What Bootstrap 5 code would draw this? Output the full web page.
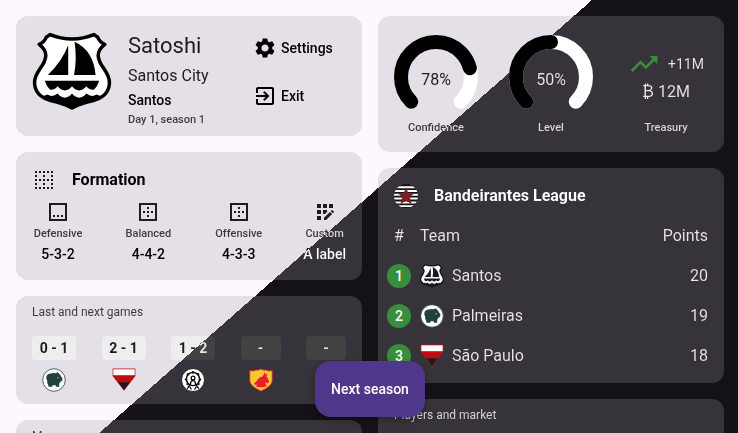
<!DOCTYPE html>
<html lang="en">
<head>
<meta charset="utf-8">
<meta name="viewport" content="width=device-width, initial-scale=1">
<title>Santos – club dashboard</title>
<link href="https://cdn.jsdelivr.net/npm/bootstrap@5.3.0/dist/css/bootstrap.min.css" rel="stylesheet">
<style>
  /* Light and dark theme meet on one diagonal of the window.
     Every surface and every text uses the same fixed gradient, so the seam runs through all of them. */
  :root { --seam: 48.1%; --angle: 138.7deg; }
  body, .panel, .score, .ink { background-attachment: fixed; background-repeat: no-repeat; }
  body {
    font-family: Roboto, "Liberation Sans", sans-serif;
    height: 100vh; overflow: hidden;
    background-image: linear-gradient(var(--angle), #fef7ff var(--seam), #141218 var(--seam));
  }
  .board { padding: 16px 14px 0 16px; gap: 16px; }
  .lane { flex: 1 1 0; min-width: 0; gap: 16px; }
  .panel {
    border-radius: 12px; padding: 16px;
    background-image: linear-gradient(var(--angle), #e5e0e7 var(--seam), #36343a var(--seam));
  }
  .ink {
    color: #1d1b20; -webkit-text-fill-color: transparent;
    background-image: linear-gradient(var(--angle), #1d1b20 var(--seam), #e9e3ea var(--seam));
    -webkit-background-clip: text; background-clip: text;
  }
  .ink-strong { background-image: linear-gradient(var(--angle), #000 var(--seam), #fff var(--seam)); }
  .ink-soft { background-image: linear-gradient(var(--angle), #3b3840 var(--seam), #dcd6df var(--seam)); }

  .t-22 { font-size: 22px; line-height: 28px; }
  .t-16 { font-size: 16px; line-height: 24px; }
  .t-14 { font-size: 14px; line-height: 20px; }
  .t-12 { font-size: 12px; line-height: 16px; }
  .t-11 { font-size: 11px; line-height: 16px; }
  .medium { font-weight: 500; }
  .glyph { width: 24px; height: 24px; fill: #1d1b20; flex: none; display: block; }
  .crest-big { width: 80px; height: 80px; flex: none; }

  .club { padding: 8px 16px; }
  .club-info { padding-top: 8px; gap: 2px; }
  .club-city { padding-top: 2px; }
  .club-actions { width: 93px; }
  .club-actions button { height: 48px; gap: 4px; }
  .club-actions .glyph { fill: #000; }

  .plain { background: none; border: 0; padding: 0; }
  .scheme { min-width: 52px; gap: 2px; }
  .scheme-last { min-width: 42px; }

  .games { padding: 8px 16px 12px; }
  .score {
    min-width: 40px; height: 24px; padding: 0 8px; border-radius: 4px; line-height: 24px; text-align: center;
    background-image: linear-gradient(var(--angle), #eee var(--seam), #424242 var(--seam));
  }
  .score-played { min-width: 44px; padding: 0 4px; }

  .stat { width: 84px; }
  .dial { width: 84px; height: 84px; fill: none; stroke-width: 14; stroke-linecap: round; overflow: visible; }
  .gauge > * { grid-area: 1 / 1; }
  .gauge-value { padding-top: 4px; }
  .trend { width: 32px; height: 32px; fill: #388e3c; }

  .league { padding: 16px 16px 7px 8px; }
  .league-head { padding-left: 8px; gap: 16px; }
  .standings td, .standings th { height: 40px; padding: 0; font-weight: 400; vertical-align: middle; }
  .standings .pos { width: 26px; text-align: center; }
  .standings .side { padding-left: 8px; }
  .rank { width: 24px; height: 24px; border-radius: 50%; background: #388e3c; color: #fff; line-height: 24px; margin: 0 1px; }
  .tail { padding: 8px 16px 48px; }

  .fab-bar { padding: 0 14px 16px 16px; pointer-events: none; }
  .fab {
    height: 56px; padding: 0 16px; border: 0; border-radius: 16px; color: #fff; background: #4f378b;
    box-shadow: 0 3px 6px rgba(0,0,0,.3); pointer-events: auto;
  }
</style>
</head>
<body>

<svg width="0" height="0" class="position-absolute" aria-hidden="true">
  <symbol id="c-santos" viewBox="1 1 78 78">
    <path d="M18.500 3.500Q40 12 61.500 3.500L65 6Q67 11 72 13Q65.500 18 65.500 24Q66 30 71 36.500Q77 45 76.500 51Q76 63 62 67.500Q49 70 40 75Q31 70 18 67.500Q4 63 3.500 51Q3 45 9 36.500Q14 30 14.500 24Q14.500 18 8 13Q13 11 15 6Z" fill="#fff" stroke="#000" stroke-width="3.400" stroke-linejoin="round"/>
    <path d="M36.300 14V43H16.500Q30 30 36.300 14Z"/>
    <path d="M42.500 10.500Q61 19 63 43H42Q45 27 42.500 10.500Z"/>
    <path d="M13.500 48.500H66.500Q65 54 61.500 57Q57 58 54 54Q51 58 47 58Q43 58 40 54Q37 58 33 58Q29 58 26 54Q23 58 18.500 57Q15 54 13.500 48.500Z"/>
    <path d="M8 63Q13 64 16 62Q21 65 26 61Q29 65 33 65Q37 65 40 61Q43 65 47 65Q51 65 54 61Q59 65 64 62Q67 64 72 63Q67 68 60 69Q48 71 40 76Q32 71 20 69Q13 68 8 63Z"/>
  </symbol>
  <symbol id="c-palmeiras" viewBox="0 0 24 24">
    <circle cx="12" cy="12" r="11.300" fill="#fff" stroke="#24403d" stroke-width=".8"/>
    <path d="M4.400 8.500Q5.200 5.600 8.500 5.400Q12 4.600 13.800 5.300L15.600 4.200L17 5.800Q18.800 6.800 19 8.800L20.300 9.600V12.800L18.600 13.600Q18 15 17.200 15.600V18.800H13.800V17.200H10.400V18.800H6.600L6 16.400Q4.800 14.500 5.200 12.500Q4 11 4.400 8.500Z" fill="#24403d"/>
    <circle cx="16" cy="9.800" r=".6" fill="#fff"/>
  </symbol>
  <symbol id="c-saopaulo" viewBox="0 0 24 24">
    <path d="M.6 .6H23.400V8L12 22.800L.6 8Z" fill="#c00d14"/>
    <path d="M1.300 1.300H22.700V7.200H1.300Z" fill="#fff"/>
    <path d="M6.200 14.200H17.800L12 22Z"/>
  </symbol>
  <symbol id="c-wheel" viewBox="0 0 24 24">
    <circle cx="12" cy="12" r="11.500" fill="#fff" stroke="#000" stroke-width=".8"/>
    <circle cx="12" cy="11" r="6.600" fill="none" stroke="#000" stroke-width="1.400"/>
    <g><circle cx="12" cy="4.400" r="1.300"/><circle cx="17" cy="6.300" r="1.300"/><circle cx="19" cy="11.500" r="1.300"/><circle cx="7" cy="6.300" r="1.300"/><circle cx="5" cy="11.500" r="1.300"/><circle cx="6.600" cy="16" r="1.300"/><circle cx="17.400" cy="16" r="1.300"/></g>
    <circle cx="12" cy="10" r="1.900" fill="none" stroke="#000" stroke-width="1.200"/>
    <path d="M9.600 16.200Q9.300 12.700 12 12.700Q14.700 12.700 14.400 16.200M10 15L6.300 20.600M14 15L17.700 20.600M8.600 18.600L10.500 21.500M15.400 18.600L13.500 21.500" fill="none" stroke="#000" stroke-width="1.200"/>
  </symbol>
  <symbol id="c-bull" viewBox="0 0 24 24">
    <path d="M.8 2.600Q4.500 3.600 7.200 2Q9.600 2.600 12 1Q14.400 2.600 16.800 2Q19.500 3.600 23.200 2.600V13Q22.500 18.500 12 23Q1.500 18.500 .8 13Z" fill="#fdc62f" stroke="#e02a2a" stroke-width=".8"/>
    <path d="M15.500 3.500L16.300 6.500L18.300 5.200L17.600 8.300L18.800 10.600L20.200 13.700L18.800 15.300L16.500 14.300Q16.600 17.300 18 18.200Q12 20.300 6.500 18.300L8.500 16.700L5 16.600Q5.200 14.400 7.800 12.900Q9.500 9.200 13.500 8.500Q15.600 6.500 15.500 3.500Z" fill="#e5202e"/>
  </symbol>
  <symbol id="c-league" viewBox="0 0 24 24">
    <clipPath id="disc"><circle cx="12" cy="12" r="12"/></clipPath>
    <g clip-path="url(#disc)">
      <path d="M0 0H24V24H0Z" fill="#141414"/>
      <path d="M0 2.200H24V4.200H0ZM0 6H24V8H0ZM0 9.800H24V11.800H0ZM0 13.600H24V15.600H0ZM0 17.400H24V19.400H0ZM0 21.200H24V23H0Z" fill="#fff"/>
    </g>
    <path d="M12 3.400L14.400 9.200H20.300L15.800 13L17.600 20.200L12 16.600L6.400 20.200L8.200 13L3.700 9.200H9.600Z" fill="#7c1d22"/>
  </symbol>
</svg>

<main class="board d-flex align-items-start">
  <div class="lane d-flex flex-column">

    <section class="panel club d-flex">
      <svg class="crest-big mt-2 me-3" role="img" aria-label="Santos crest"><use href="#c-santos"/></svg>
      <div class="club-info d-flex flex-column align-items-start flex-grow-1">
        <h1 class="ink t-22 fw-normal mb-0">Satoshi</h1>
        <div class="club-city ink t-16">Santos City</div>
        <div class="ink ink-strong t-14 medium">Santos</div>
        <div class="ink ink-soft t-11 medium">Day 1, season 1</div>
      </div>
      <div class="club-actions d-flex flex-column">
        <button type="button" class="plain d-flex align-items-center">
          <svg class="glyph" viewBox="0 0 24 24" aria-hidden="true"><path d="M19.140 12.940c.04-.3.06-.61.06-.94 0-.32-.02-.64-.07-.94l2.030-1.580c.18-.14.23-.41.12-.61l-1.920-3.320c-.12-.22-.37-.29-.59-.22l-2.390.96c-.5-.38-1.030-.7-1.620-.94l-.36-2.540c-.04-.24-.24-.41-.48-.41h-3.840c-.24 0-.43.17-.47.41l-.36 2.540c-.59.24-1.130.57-1.620.94l-2.390-.96c-.22-.08-.47 0-.59.22L2.740 8.870c-.12.21-.08.47.12.61l2.030 1.580c-.05.3-.09.63-.09.94s.02.64.07.94l-2.030 1.580c-.18.14-.23.41-.12.61l1.920 3.320c.12.22.37.29.59.22l2.390-.96c.5.38 1.030.7 1.620.94l.36 2.540c.05.24.24.41.48.41h3.840c.24 0 .44-.17.47-.41l.36-2.540c.59-.24 1.130-.56 1.620-.94l2.390.96c.22.08.47 0 .59-.22l1.920-3.320c.12-.22.07-.47-.12-.61l-2.010-1.580zM12 15.600c-1.980 0-3.600-1.620-3.600-3.600s1.620-3.600 3.600-3.600 3.600 1.620 3.600 3.600-1.620 3.600-3.600 3.600z"/></svg>
          <span class="ink ink-strong t-14 medium">Settings</span>
        </button>
        <button type="button" class="plain d-flex align-items-center">
          <svg class="glyph" viewBox="0 0 24 24" aria-hidden="true"><path d="M10.090 15.590L11.500 17l5-5-5-5-1.410 1.410L12.670 11H3v2h9.670l-2.580 2.590zM19 3H5c-1.110 0-2 .9-2 2v4h2V5h14v14H5v-4H3v4c0 1.100.89 2 2 2h14c1.100 0 2-.9 2-2V5c0-1.100-.9-2-2-2z"/></svg>
          <span class="ink ink-strong t-14 medium">Exit</span>
        </button>
      </div>
    </section>

    <section class="panel">
      <header class="d-flex align-items-center gap-3 mb-2">
        <svg class="glyph" viewBox="0 0 24 24" aria-hidden="true"><path d="M7 5h2V3H7v2zm0 8h2v-2H7v2zm0 8h2v-2H7v2zm4-4h2v-2h-2v2zm0 4h2v-2h-2v2zm-8 0h2v-2H3v2zm0-4h2v-2H3v2zm0-4h2v-2H3v2zm0-4h2V7H3v2zm0-4h2V3H3v2zm8 8h2v-2h-2v2zm8 4h2v-2h-2v2zm0-4h2v-2h-2v2zm0 8h2v-2h-2v2zm0-12h2V7h-2v2zm-8 0h2V7h-2v2zm8-6v2h2V3h-2zm-8 2h2V3h-2v2zm4 16h2v-2h-2v2zm0-8h2v-2h-2v2zm0-8h2V3h-2v2z"/></svg>
        <h2 class="ink ink-strong t-16 fw-bold mb-0">Formation</h2>
      </header>
      <div class="d-flex justify-content-between">
        <button type="button" class="plain scheme d-flex flex-column align-items-center">
          <svg class="glyph" viewBox="0 0 24 24" aria-hidden="true"><path d="M3 3v18h18V3H3zm16 16H5V5h14v14zM7 15h2v2H7zM11 15h2v2h-2zM15 15h2v2h-2z"/></svg>
          <span class="ink ink-soft t-11 medium">Defensive</span>
          <span class="ink ink-strong t-14 medium">5-3-2</span>
        </button>
        <button type="button" class="plain scheme d-flex flex-column align-items-center">
          <svg class="glyph" viewBox="0 0 24 24" aria-hidden="true"><path d="M13 7h-2v2h2V7zm0 4h-2v2h2v-2zm4 0h-2v2h2v-2zM3 3v18h18V3H3zm16 16H5V5h14v14zm-6-4h-2v2h2v-2zm-4-4H7v2h2v-2z"/></svg>
          <span class="ink ink-soft t-11 medium">Balanced</span>
          <span class="ink ink-strong t-14 medium">4-4-2</span>
        </button>
        <button type="button" class="plain scheme d-flex flex-column align-items-center">
          <svg class="glyph" viewBox="0 0 24 24" aria-hidden="true"><path d="M13 7h-2v2h2V7zm0 4h-2v2h2v-2zm4 0h-2v2h2v-2zM3 3v18h18V3H3zm16 16H5V5h14v14zm-6-4h-2v2h2v-2zm-4-4H7v2h2v-2z"/></svg>
          <span class="ink ink-soft t-11 medium">Offensive</span>
          <span class="ink ink-strong t-14 medium">4-3-3</span>
        </button>
        <button type="button" class="plain scheme scheme-last d-flex flex-column align-items-center">
          <svg class="glyph" viewBox="0 0 24 24" aria-hidden="true"><path d="M10 4h4v4h-4zM4 16h4v4H4zM4 10h4v4H4zM4 4h4v4H4zM16 4h4v4h-4zM11 17.860V20h2.100l5.980-5.970-2.120-2.120zM14 12.030V10h-4v4h2.030zM20.850 11.560l-1.410-1.410c-.2-.2-.51-.2-.71 0l-1.060 1.060 2.120 2.120 1.060-1.060c.2-.2.2-.51 0-.71z"/></svg>
          <span class="ink ink-soft t-11 medium">Custom</span>
          <span class="ink ink-strong t-14 medium">A label</span>
        </button>
      </div>
    </section>

    <section class="panel games">
      <h2 class="ink ink-soft t-12 fw-normal mb-3">Last and next games</h2>
      <div class="d-flex justify-content-between">
        <div class="d-flex flex-column align-items-center gap-2">
          <div class="score score-played"><span class="ink t-14 fw-bold">0 - 1</span></div>
          <svg class="glyph" role="img" aria-label="Palmeiras"><use href="#c-palmeiras"/></svg>
        </div>
        <div class="d-flex flex-column align-items-center gap-2">
          <div class="score score-played"><span class="ink t-14 fw-bold">2 - 1</span></div>
          <svg class="glyph" role="img" aria-label="São Paulo"><use href="#c-saopaulo"/></svg>
        </div>
        <div class="d-flex flex-column align-items-center gap-2">
          <div class="score score-played"><span class="ink t-14 fw-bold">1 - 2</span></div>
          <svg class="glyph" role="img" aria-label="Wheel crest"><use href="#c-wheel"/></svg>
        </div>
        <div class="d-flex flex-column align-items-center gap-2">
          <div class="score"><span class="ink t-14 fw-bold">-</span></div>
          <svg class="glyph" role="img" aria-label="Bull crest"><use href="#c-bull"/></svg>
        </div>
        <div class="d-flex flex-column align-items-center gap-2">
          <div class="score"><span class="ink t-14 fw-bold">-</span></div>
        </div>
      </div>
    </section>

    <section class="panel tail">
      <h2 class="ink ink-soft t-12 fw-normal mb-0">Money</h2>
    </section>
  </div>

  <div class="lane d-flex flex-column">
    <section class="panel d-flex justify-content-between">
      <div class="stat d-flex flex-column align-items-center justify-content-end pt-1">
        <div class="gauge d-grid">
          <svg class="dial" viewBox="0 1 84 84" aria-hidden="true">
            <path d="M17.250 66.750A35 35 0 1 1 66.750 66.750" stroke="#fff"/>
            <path d="M17.250 66.750A35 35 0 1 1 66.750 66.750" stroke="#000" pathLength="100" stroke-dasharray="78 200"/>
          </svg>
          <div class="gauge-value ink t-16 d-flex align-items-center justify-content-center">78%</div>
        </div>
        <div class="ink ink-soft t-11 medium">Confidence</div>
      </div>
      <div class="stat d-flex flex-column align-items-center justify-content-end">
        <div class="gauge d-grid">
          <svg class="dial" viewBox="0 1 84 84" aria-hidden="true">
            <path d="M17.250 66.750A35 35 0 1 1 66.750 66.750" stroke="#fff"/>
            <path d="M17.250 66.750A35 35 0 1 1 66.750 66.750" stroke="#000" pathLength="100" stroke-dasharray="50 200"/>
          </svg>
          <div class="gauge-value ink t-16 d-flex align-items-center justify-content-center">50%</div>
        </div>
        <div class="ink ink-soft t-11 medium">Level</div>
      </div>
      <div class="stat d-flex flex-column align-items-center justify-content-end">
        <div class="d-flex align-items-center gap-2">
          <svg class="trend" viewBox="0 0 24 24" aria-hidden="true"><path d="M16 6l2.290 2.290-4.880 4.880-4-4L2 16.590 3.410 18l6-6 4 4 6.300-6.290L22 12V6z"/></svg>
          <span class="ink t-14">+11M</span>
        </div>
        <div class="ink t-16 mb-3">₿ 12M</div>
        <div class="ink ink-soft t-11 medium">Treasury</div>
      </div>
    </section>

    <section class="panel league">
      <header class="league-head d-flex align-items-center mb-2">
        <svg class="glyph" role="img" aria-label="League badge"><use href="#c-league"/></svg>
        <h2 class="ink ink-strong t-16 fw-bold mb-0">Bandeirantes League</h2>
      </header>
      <table class="standings w-100 t-16">
        <thead>
          <tr><th class="pos" scope="col"><span class="ink">#</span></th><th class="side" scope="col"><span class="ink">Team</span></th><th class="text-end" scope="col"><span class="ink">Points</span></th></tr>
        </thead>
        <tbody>
          <tr><td class="pos"><div class="rank t-14 medium">1</div></td><td class="side"><div class="d-flex align-items-center gap-2"><svg class="glyph" aria-hidden="true"><use href="#c-santos"/></svg><span class="ink">Santos</span></div></td><td class="text-end"><span class="ink">20</span></td></tr>
          <tr><td class="pos"><div class="rank t-14 medium">2</div></td><td class="side"><div class="d-flex align-items-center gap-2"><svg class="glyph" aria-hidden="true"><use href="#c-palmeiras"/></svg><span class="ink">Palmeiras</span></div></td><td class="text-end"><span class="ink">19</span></td></tr>
          <tr><td class="pos"><div class="rank t-14 medium">3</div></td><td class="side"><div class="d-flex align-items-center gap-2"><svg class="glyph" aria-hidden="true"><use href="#c-saopaulo"/></svg><span class="ink">São Paulo</span></div></td><td class="text-end"><span class="ink">18</span></td></tr>
        </tbody>
      </table>
    </section>

    <section class="panel tail">
      <h2 class="ink ink-soft t-12 fw-normal mb-0">Players and market</h2>
    </section>
  </div>
</main>

<div class="fab-bar fixed-bottom d-flex justify-content-center">
  <button type="button" class="fab t-14 medium">Next season</button>
</div>

<script src="https://cdn.jsdelivr.net/npm/bootstrap@5.3.0/dist/js/bootstrap.bundle.min.js"></script>
</body>
</html>
